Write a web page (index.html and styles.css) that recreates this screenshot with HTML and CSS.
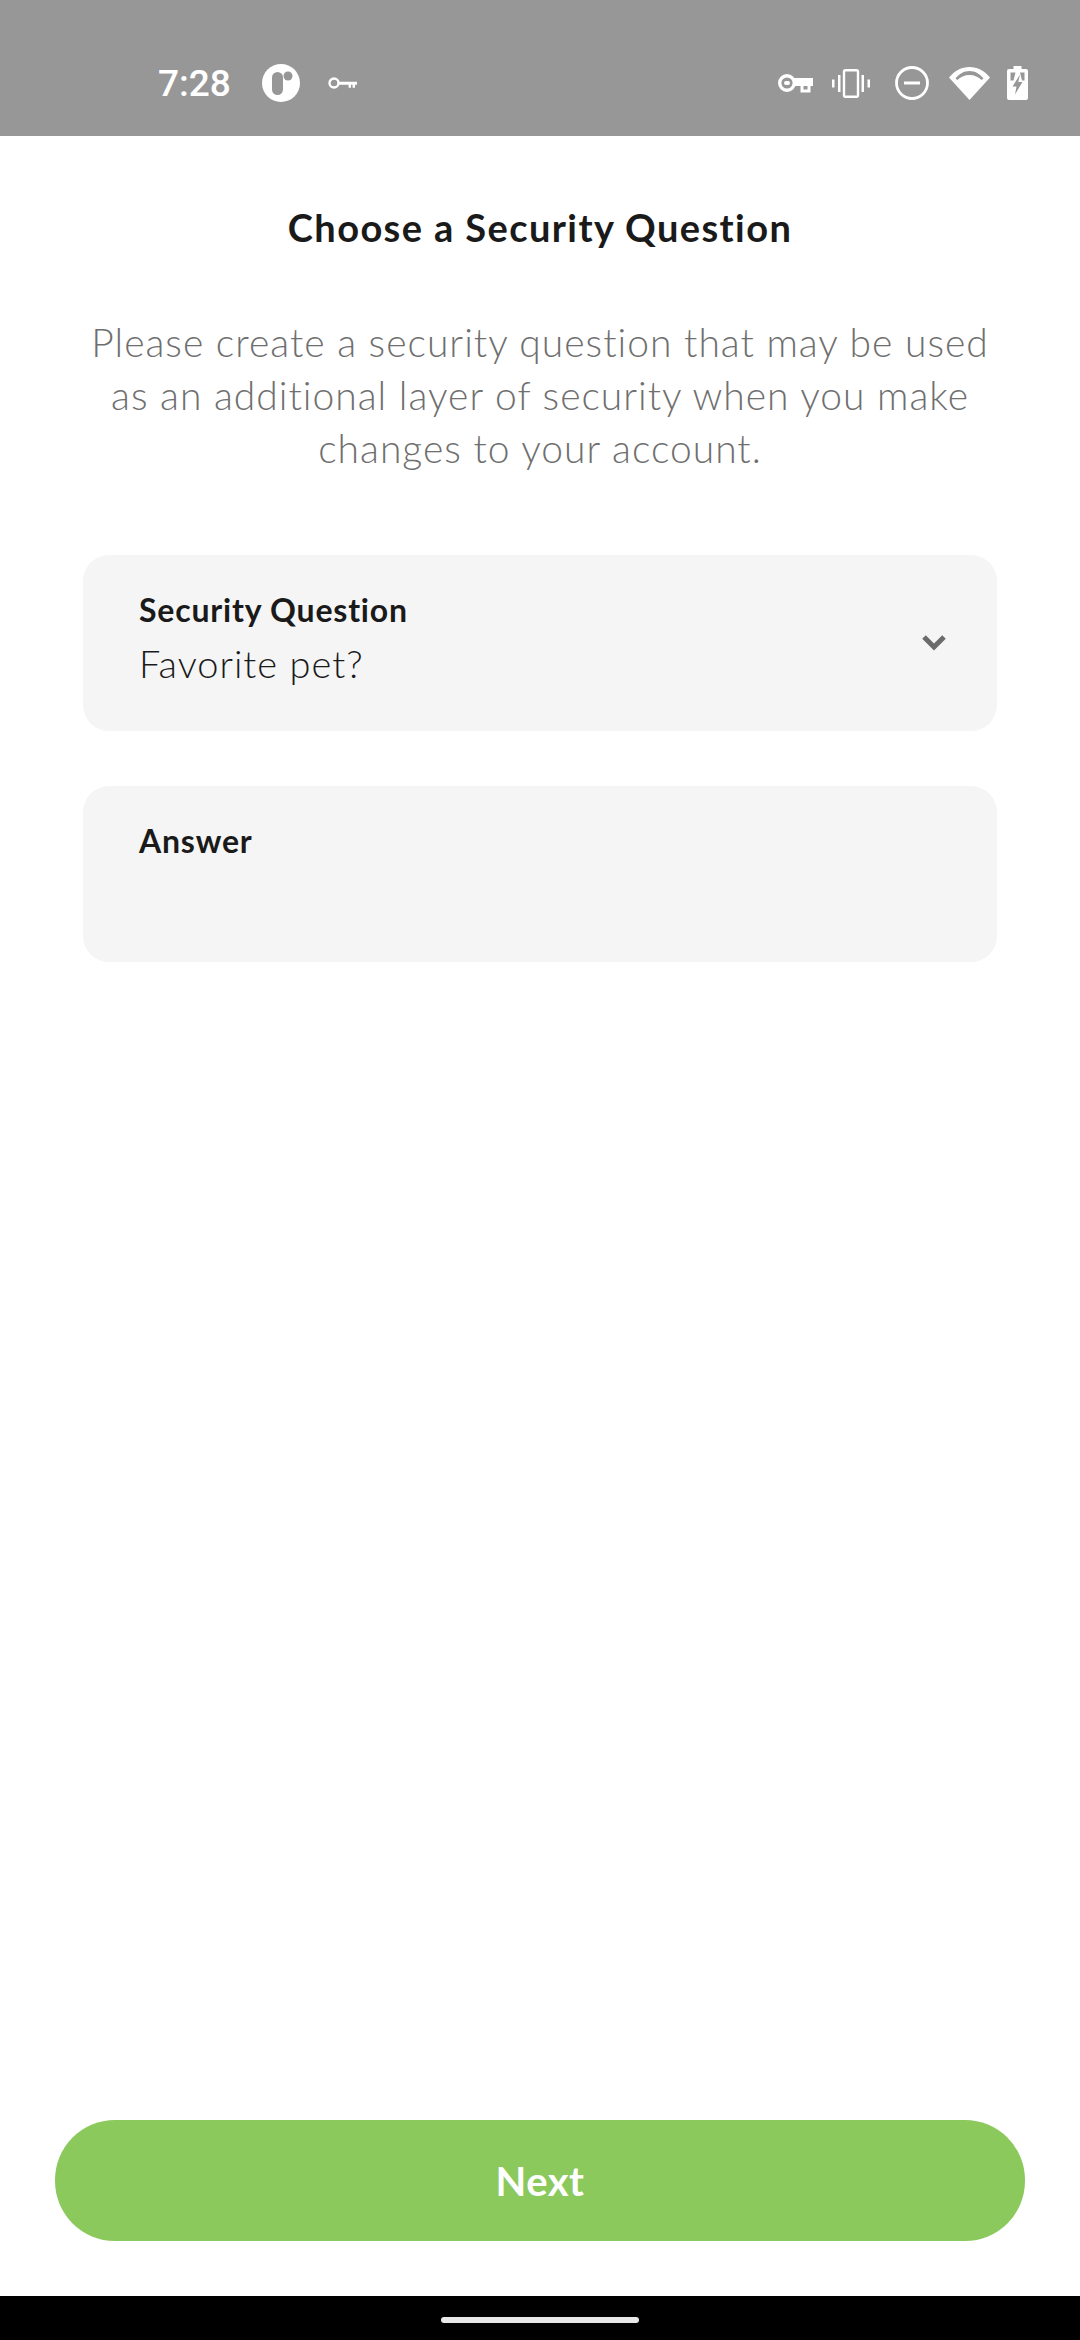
FILE: index.html
```html
<!DOCTYPE html>
<html lang="en">
<head>
  <meta charset="UTF-8">
  <meta name="viewport" content="width=device-width, initial-scale=1.0">
  <title>Choose a Security Question</title>
  <link rel="stylesheet" href="styles.css">
</head>
<body>
  <div class="status-bar">
    <span class="time">7:28</span>
    <svg class="icon-app" viewBox="0 0 38 38" width="38" height="38">
      <circle cx="19" cy="19" r="19" fill="#fff"/>
      <rect x="10" y="8" width="11" height="23" rx="5.500" fill="#979797"/>
      <circle cx="26" cy="12" r="4.500" fill="#979797"/>
    </svg>
    <svg class="icon-vpn" viewBox="0 0 29 14" width="29" height="14">
      <circle cx="6" cy="7" r="4.500" fill="none" stroke="#fff" stroke-width="2.400"/>
      <path d="M11 5.800h18v3h-2v3h-2.400v-3h-1.600v3h-2.400v-3H11z" fill="#fff"/>
    </svg>
    <div class="status-right">
      <svg class="icon-key" viewBox="0 0 35 19" width="35" height="19">
        <circle cx="9" cy="9" r="7.300" fill="none" stroke="#fff" stroke-width="3.400"/>
        <rect x="6" y="7" width="6" height="4" rx="2" fill="#fff"/>
        <path d="M15 4h20v8h-2.500v6.500h-10V12H15z" fill="#fff"/>
        <path d="M25.500 12h4v3.500h-4z" fill="#979797"/>
      </svg>
      <svg class="icon-vibrate" viewBox="0 0 38 29" width="38" height="29">
        <rect x="12" y="1.200" width="14" height="26.600" rx="1.500" fill="none" stroke="#fff" stroke-width="2.400"/>
        <path d="M6 6h2.500v17H6zM29.500 6H32v17h-2.500zM0 10.500h2.500v8H0zM35.500 10.500H38v8h-2.500z" fill="#fff"/>
      </svg>
      <svg class="icon-dnd" viewBox="0 0 34 34" width="34" height="34">
        <circle cx="17" cy="17" r="15.500" fill="none" stroke="#fff" stroke-width="2.800"/>
        <rect x="9" y="15.500" width="16" height="3" fill="#fff"/>
      </svg>
      <svg class="icon-wifi" viewBox="0 0 41 33" width="41" height="33">
        <path d="M20.500 33 0 10.500C5.500 4 12.500 0 20.500 0S35.500 4 41 10.500z" fill="#fff"/>
        <path d="M6.500 11.200C10.500 6.800 15 4 20.500 4S30.500 6.800 34.500 11.200l-1.800 1.900C29.500 10 25.500 8 20.500 8S11.500 10 8.300 13.100z" fill="#979797"/>
      </svg>
      <svg class="icon-battery" viewBox="0 0 21 34" width="21" height="34">
        <path d="M6.500 0h8v3h4.500a2 2 0 0 1 2 2v27a2 2 0 0 1-2 2H2a2 2 0 0 1-2-2V5a2 2 0 0 1 2-2h4.500z" fill="#fff"/>
        <path d="M3.500 6.500h5l-2 8H3.500zM13 6.500h4.500v8H15z" fill="#979797"/>
        <path d="M13 8.500 5.500 20.500h4l-1.500 8 7.500-12.500h-4.200z" fill="#979797"/>
      </svg>
    </div>
  </div>

  <main class="content">
    <h1 class="title">Choose a Security Question</h1>
    <p class="intro">Please create a security question that may be used as an additional layer of security when you make changes to your account.</p>

    <div class="field field-select">
      <div class="field-label">Security Question</div>
      <div class="field-value">Favorite pet?</div>
      <svg class="chevron" viewBox="0 0 26 17" width="26" height="17">
        <path d="M3 3l10 10L23 3" fill="none" stroke="#6b6b6b" stroke-width="5"/>
      </svg>
    </div>

    <div class="field">
      <div class="field-label">Answer</div>
    </div>

    <button class="next-btn" type="button">Next</button>
  </main>

  <div class="nav-bar">
    <div class="home-pill"></div>
  </div>
</body>
</html>
```

FILE: styles.css
```css
* {
  box-sizing: border-box;
  margin: 0;
  padding: 0;
}

body {
  font-family: 'Lato', 'Open Sans', sans-serif;
  background-color: #fff;
  width: 1080px;
  height: 2340px;
  display: flex;
  flex-direction: column;
  overflow: hidden;
}

.status-bar {
  height: 136px;
  flex-shrink: 0;
  background-color: #979797;
  display: flex;
  align-items: center;
  padding: 30px 52px 0 158px;
  color: #fff;
}

.time {
  font-family: 'Roboto', sans-serif;
  font-size: 37px;
  font-weight: 500;
  line-height: 1;
  width: 104px;
}

.icon-vpn {
  margin-left: 28px;
}

.status-right {
  margin-left: auto;
  display: flex;
  align-items: center;
}

.icon-vibrate {
  margin-left: 19px;
}

.icon-dnd {
  margin-left: 25px;
}

.icon-wifi {
  margin-left: 20px;
}

.icon-battery {
  margin-left: 17px;
}

.content {
  flex: 1;
  display: flex;
  flex-direction: column;
  align-items: center;
  padding: 0 55px 55px;
}

.title {
  font-size: 38px;
  font-weight: 700;
  line-height: 46px;
  letter-spacing: 1.4px;
  color: #1a1a1a;
  margin-top: 68px;
}

.intro {
  width: 914px;
  margin-top: 66px;
  font-size: 39px;
  font-weight: 300;
  line-height: 53px;
  letter-spacing: 1px;
  text-align: center;
  color: #6f6f6f;
}

.field {
  position: relative;
  width: 914px;
  height: 176px;
  padding: 36px 56px 0;
  background-color: #f5f5f5;
  border-radius: 26px;
  margin-top: 55px;
  flex-shrink: 0;
}

.field-select {
  margin-top: 80px;
}

.field-label {
  font-size: 32px;
  font-weight: 700;
  line-height: 38px;
  letter-spacing: 0.8px;
  color: #1a1a1a;
}

.field-value {
  margin-top: 11px;
  font-size: 38px;
  font-weight: 300;
  line-height: 46px;
  letter-spacing: 1px;
  color: #1a1a1a;
}

.chevron {
  position: absolute;
  right: 50px;
  top: 79px;
}

.next-btn {
  margin-top: auto;
  width: 970px;
  height: 121px;
  border: none;
  border-radius: 60px;
  background-color: #8bc95d;
  color: #fff;
  font-family: inherit;
  font-size: 40px;
  font-weight: 700;
  letter-spacing: 0.5px;
}

.nav-bar {
  height: 44px;
  flex-shrink: 0;
  background-color: #000;
  display: flex;
  justify-content: center;
  padding-top: 21px;
}

.home-pill {
  width: 198px;
  height: 6px;
  border-radius: 3px;
  background-color: #e8e8e8;
}
```
